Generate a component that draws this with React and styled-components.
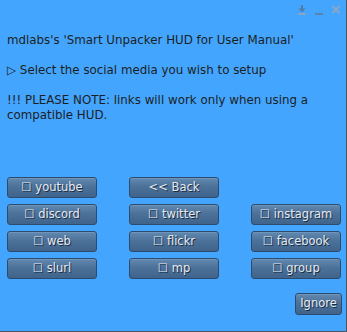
import React from "react";
import styled, { createGlobalStyle } from "styled-components";

const Global = createGlobalStyle`
  html, body { margin: 0; padding: 0; background: #44a5ff; }
  body { font-family: "DejaVu Sans", "Liberation Sans", sans-serif; }
`;

const Panel = styled.div`
  box-sizing: border-box;
  width: 347px;
  height: 332px;
  background: #44a5ff;
  border-right: 1px solid #4b5460;
  border-bottom: 1px solid #4b5460;
  display: flex;
  flex-direction: column;
`;

const TitleBar = styled.div`
  height: 22px;
  display: flex;
  justify-content: flex-end;
  align-items: flex-start;
  gap: 5px;
  padding: 4px 4px 0 0;
  box-sizing: border-box;
`;

const IconBtn = styled.svg`
  width: 12px;
  height: 12px;
  display: block;
`;

const Message = styled.div`
  margin-top: 11px;
  padding-left: 7px;
  font-size: 11.85px;
  line-height: 15px;
  color: #1b1f24;
`;

const Line = styled.div`
  min-height: 15px;
  white-space: nowrap;
`;

const Grid = styled.div`
  margin-top: 54px;
  padding-left: 7px;
  display: grid;
  grid-template-columns: repeat(3, 90px);
  grid-auto-rows: 21px;
  column-gap: 32px;
  row-gap: 6px;
`;

const Button = styled.button`
  box-sizing: border-box;
  width: ${(p) => p.$w || "90px"};
  height: ${(p) => p.$h || "21px"};
  padding: 0;
  border: 1px solid #2b4c70;
  border-radius: 3px;
  background: linear-gradient(to bottom, #6289b0 0%, #4d729a 45%, #3f638a 100%);
  box-shadow: inset 0 1px 0 rgba(140, 175, 210, 0.35);
  color: #e4eaf1;
  font-family: "DejaVu Sans", "Liberation Sans", sans-serif;
  font-size: 11.5px;
  line-height: 1;
  text-shadow: 1px 1px 0 #1c2c3e;
  display: flex;
  align-items: center;
  justify-content: center;
  white-space: nowrap;
`;

const Spacer = styled.div``;

const Footer = styled.div`
  margin-top: 14px;
  display: flex;
  justify-content: flex-end;
  padding-right: 4px;
`;

const rows = [
  ["☐ youtube", "<< Back", null],
  ["☐ discord", "☐ twitter", "☐ instagram"],
  ["☐ web", "☐ flickr", "☐ facebook"],
  ["☐ slurl", "☐ mp", "☐ group"],
];

export default function App() {
  return (
    <>
      <Global />
      <Panel>
        <TitleBar>
          <IconBtn viewBox="0 0 12 12">
            <rect x="5" y="1" width="2" height="4" fill="#4f7eab" />
            <path d="M2.5 4.5 L9.5 4.5 L6 8.5 Z" fill="#4f7eab" />
            <rect x="2.5" y="9" width="7" height="2" fill="#8ea6bd" />
          </IconBtn>
          <IconBtn viewBox="0 0 12 12">
            <rect x="2" y="9" width="8" height="2" fill="#5a84ad" />
          </IconBtn>
          <IconBtn viewBox="0 0 12 12">
            <path d="M2.5 2 L9.5 9 M9.5 2 L2.5 9" stroke="#8fa6bd" strokeWidth="1.8" />
          </IconBtn>
        </TitleBar>
        <Message>
          <Line>mdlabs's 'Smart Unpacker HUD for User Manual'</Line>
          <Line />
          <Line>▷ Select the social media you wish to setup</Line>
          <Line />
          <Line>!!! PLEASE NOTE: links will work only when using a</Line>
          <Line>compatible HUD.</Line>
        </Message>
        <Grid>
          {rows.flat().map((label, i) =>
            label ? <Button key={i}>{label}</Button> : <Spacer key={i} />
          )}
        </Grid>
        <Footer>
          <Button $w="47px" $h="22px">Ignore</Button>
        </Footer>
      </Panel>
    </>
  );
}
